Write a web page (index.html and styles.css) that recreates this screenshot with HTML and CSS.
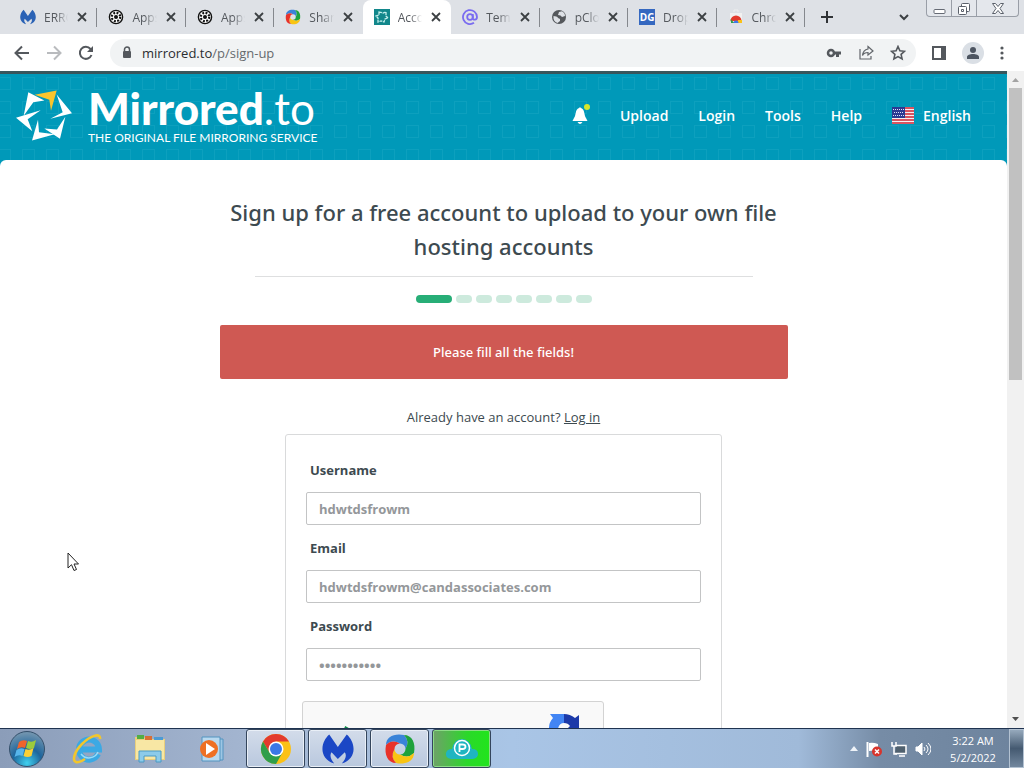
FILE: index.html
```html
<!DOCTYPE html>
<html lang="en">
<head>
<meta charset="UTF-8">
<title>Account - Mirrored.to</title>
<link rel="stylesheet" href="styles.css">
</head>
<body>
<svg class="defs" aria-hidden="true">
  <symbol id="x" viewBox="0 0 10 10"><path d="M1 1l8 8M9 1l-8 8" stroke="#3c4043" stroke-width="1.8"/></symbol>
  <symbol id="wheel" viewBox="0 0 16 16">
    <circle cx="8" cy="8" r="6.6" fill="#fff" stroke="#111" stroke-width="1.4"/>
    <circle cx="8" cy="8" r="4.2" fill="none" stroke="#111" stroke-width="2.2" stroke-dasharray="1.9 1.4"/>
    <circle cx="8" cy="8" r="2" fill="#111"/>
  </symbol>
  <symbol id="malware" viewBox="243 24 97 88">
    <path d="M265 24C240 45 230 95 280 112 268 98 266 86 272 78l19 20 21-20c6 8 4 20-9 34 50-17 40-67 15-88l-27 38z"/>
  </symbol>
  <symbol id="swirl" viewBox="0 0 32 32">
    <path d="M2 12C2 4 10 0 20 2Q26 8 21.500 16A5.500 5.500 0 0 0 16 10.500Q8 6 2 12z" fill="#3a83d8"/>
    <path d="M2 12C2 4 10 0 20 2Q26 8 21.500 16A5.500 5.500 0 0 0 16 10.500Q8 6 2 12z" fill="#1ea23c" transform="rotate(90 16 16)"/>
    <path d="M2 12C2 4 10 0 20 2Q26 8 21.500 16A5.500 5.500 0 0 0 16 10.500Q8 6 2 12z" fill="#f9c413" transform="rotate(180 16 16)"/>
    <path d="M2 12C2 4 10 0 20 2Q26 8 21.500 16A5.500 5.500 0 0 0 16 10.500Q8 6 2 12z" fill="#e8322a" transform="rotate(270 16 16)"/>
  </symbol>
  <symbol id="chrome" viewBox="0 0 32 32">
    <circle cx="16" cy="16" r="15" fill="#fbc116"/>
    <path d="M3 8.500A15 15 0 0 1 29 8.500H16l-6.500 11z" fill="#e33b2e"/>
    <path d="M3 8.500A15 15 0 0 0 16 31l6.500-11.500H9.500z" fill="#2f9e4b"/>
    <circle cx="16" cy="16" r="7.500" fill="#fff"/><circle cx="16" cy="16" r="6" fill="#3b78e7"/>
  </symbol>
</svg>

<header class="browser">
  <div class="strip">
    <div class="tabs">
      <div class="tab"><svg class="fav" fill="#2a62b5"><use href="#malware"/></svg><span>ERROR</span><button aria-label="Close tab"><svg><use href="#x"/></svg></button></div>
      <div class="tab"><svg class="fav"><use href="#wheel"/></svg><span>Apps</span><button aria-label="Close tab"><svg><use href="#x"/></svg></button></div>
      <div class="tab"><svg class="fav"><use href="#wheel"/></svg><span>Apps</span><button aria-label="Close tab"><svg><use href="#x"/></svg></button></div>
      <div class="tab plain"><svg class="fav"><use href="#swirl"/></svg><span>Share</span><button aria-label="Close tab"><svg><use href="#x"/></svg></button></div>
      <div class="tab active plain"><svg class="fav" viewBox="0 0 16 16"><path fill="#12878b" d="M0 0h16v16H0z"/><path d="M5 3l4 1 3-1v4l2 2-3 1-1 3-3-1-3 1V9L2 7l3-1z" fill="none" stroke="#c4efec" stroke-width="1.300" stroke-dasharray="3 .7"/></svg><span>Account</span><button aria-label="Close tab"><svg><use href="#x"/></svg></button></div>
      <div class="tab"><svg class="fav" viewBox="0 0 16 16" fill="none" stroke="#7a6cf0" stroke-width="1.800"><circle cx="8" cy="8" r="2.800"/><path d="M10.800 5v4.300c0 2 4.200 2 4.200-1.300a7 7 0 1 0-3 5.800"/></svg><span>Temp</span><button aria-label="Close tab"><svg><use href="#x"/></svg></button></div>
      <div class="tab"><svg class="fav" viewBox="0 0 16 16"><circle cx="8" cy="8" r="7" fill="#55585c"/><path d="M2.500 7c2 .5 4 0 4.500 2l2 1v2l-2.500 2C3.500 13 2 10.500 2.500 7zM8 3l3-.7C13 3.500 14 5 14 7l-3 1-1.500-1.500L7 6z" fill="#dee1e6"/></svg><span>pCloud</span><button aria-label="Close tab"><svg><use href="#x"/></svg></button></div>
      <div class="tab"><b class="fav dg">DG</b><span>Drop</span><button aria-label="Close tab"><svg><use href="#x"/></svg></button></div>
      <div class="tab"><svg class="fav" viewBox="0 0 16 16"><path d="M2 4h12v10H2z" fill="#f1f1f1"/><path d="M6 3V1h4v2" fill="none" stroke="#eee"/><path d="M2.500 12a5.500 5.500 0 0 1 11 0z" fill="#e33b2e"/><path d="M2.500 10l4 4H3z" fill="#2f9e4b"/><path d="M10 11h4v3H9z" fill="#fbc116"/><path d="M5.500 14a2.500 2.500 0 0 1 5 0z" fill="#3b78e7"/></svg><span>Chrome</span><button aria-label="Close tab"><svg><use href="#x"/></svg></button></div>
    </div>
    <button class="new-tab" aria-label="New tab"><svg width="12" height="12" viewBox="0 0 12 12"><path d="M6 0v12M0 6h12" stroke="#303336" stroke-width="2"/></svg></button>
    <button class="tab-search" aria-label="Search tabs"><svg width="10" height="7" viewBox="0 0 10 7"><path d="M1 1l4 4 4-4" fill="none" stroke="#3c4043" stroke-width="2"/></svg></button>
    <div class="window-buttons">
      <button aria-label="Minimize"><svg width="13" height="15" viewBox="0 0 13 15"><rect x="1" y="8.500" width="11" height="4" rx="1" fill="#fff" stroke="#666b75"/></svg></button>
      <button aria-label="Restore"><svg width="14" height="15" viewBox="0 0 14 15" fill="#fff" stroke="#5a606a"><rect x="4.500" y="2.500" width="8" height="8" rx="1"/><rect x="1.500" y="5.500" width="8" height="8" rx="1"/><path d="M4.500 8.500h2v2h-2z"/></svg></button>
      <button class="win-close" aria-label="Close"><svg width="14" height="13" viewBox="0 0 14 13"><path d="M1.500 1.500h3L7 4.500l2.500-3h3L9 6.500l3.500 5h-3L7 8.500l-2.500 3h-3l3.500-5z" fill="#fff" stroke="#5a606a"/></svg></button>
    </div>
  </div>
  <div class="toolbar">
    <button aria-label="Back"><svg width="16" height="16" viewBox="0 0 16 16"><path d="M15 8H2M8 1.500L1.500 8 8 14.500" fill="none" stroke="#54585d" stroke-width="2"/></svg></button>
    <button aria-label="Forward"><svg width="16" height="16" viewBox="0 0 16 16"><path d="M1 8h13M8 1.500L14.500 8 8 14.500" fill="none" stroke="#b9bbbe" stroke-width="2"/></svg></button>
    <button aria-label="Reload"><svg width="16" height="16" viewBox="0 0 16 16"><path d="M13.500 10A6 6 0 1 1 12.500 4L14 6" fill="none" stroke="#54585d" stroke-width="2"/><path d="M15 1v6H9z" fill="#54585d"/></svg></button>
    <div class="omnibox">
      <svg width="10" height="13" viewBox="0 0 10 13"><rect x="1" y="5" width="8" height="7" rx="1" fill="#54585d"/><path d="M2.500 5V3.500a2.500 2.500 0 0 1 5 0V5" fill="none" stroke="#54585d" stroke-width="1.500"/></svg>
      <span class="url"><b>mirrored.to</b>/p/sign-up</span>
      <button aria-label="Passwords"><svg width="16" height="12" viewBox="0 0 16 12"><path d="M8.500 4.500H15v3h-2v2.500h-3V7.500H8.500z" fill="#54585d"/><circle cx="5" cy="6" r="3" fill="none" stroke="#54585d" stroke-width="2.500"/></svg></button>
      <button aria-label="Share"><svg width="16" height="15" viewBox="0 0 16 15" fill="none" stroke="#62666b" stroke-width="1.200"><path d="M2 4v10h11v-3"/><path d="M10 1.500L15 6l-5 4V7.500Q6 7.500 4.500 10.500 5 5 10 4z"/></svg></button>
      <button aria-label="Bookmark"><svg width="16" height="16" viewBox="0 0 16 16"><path d="M8 1.500l1.900 4.300 4.600.5-3.400 3.100 1 4.600L8 11.600 3.900 14l1-4.600L1.500 6.300l4.600-.5z" fill="none" stroke="#54585d" stroke-width="1.600"/></svg></button>
    </div>
    <button aria-label="Side panel"><svg width="14" height="14" viewBox="0 0 14 14"><path d="M1 1h12v12H1z" fill="none" stroke="#54585d" stroke-width="2"/><path d="M9 1h4v12H9z" fill="#54585d"/></svg></button>
    <button class="avatar" aria-label="Profile"><svg width="14" height="14" viewBox="0 0 14 14" fill="#4d5561"><circle cx="7" cy="4" r="3"/><path d="M1 13v-2c0-4 12-4 12 0v2z"/></svg></button>
    <button aria-label="Menu"><svg width="4" height="14" viewBox="0 0 4 14" fill="#54585d"><circle cx="2" cy="2" r="1.600"/><circle cx="2" cy="7" r="1.600"/><circle cx="2" cy="12" r="1.600"/></svg></button>
  </div>
</header>

<div class="viewport">
  <div class="page">
    <div class="site-header">
      <a class="brand" href="#">
        <svg class="logo" viewBox="48 62 168 152">
          <g fill="#fff">
            <path d="M85 68l48 25-33 5-29 41z"/>
            <path d="M48 145l74-23-39 27 14 36z"/>
            <path d="M114 151l3 37 47 6-68 19z"/>
            <path d="M196 142l-16 66-47-31 38 3z"/>
            <path d="M170 75l46 56-65 17 37-20z"/>
          </g>
          <path d="M104 76l66-13-17 61-5-33z" fill="#fbc52d"/>
        </svg>
        <span class="brand-text">
          <span class="brand-name">Mirrored<i>.to</i></span>
          <span class="tagline">THE ORIGINAL FILE MIRRORING SERVICE</span>
        </span>
      </a>
      <nav>
        <a href="#" class="bell" aria-label="Notifications"><svg width="18" height="22" viewBox="0 0 18 22"><path d="M7 4q1-1.500 2 0c4 1 3 8 5 10l1.500 3H0.500L2 14C4 12 3 5 7 4zM5.500 18h5q-2.500 4-5 0z" fill="#fff"/><circle cx="15" cy="3" r="3" fill="#d6e62b"/></svg></a>
        <a href="#">Upload</a>
        <a href="#">Login</a>
        <a href="#">Tools</a>
        <a href="#">Help</a>
        <a href="#" class="language"><svg width="22" height="17" viewBox="0 0 22 17"><path d="M0 0h22v17H0z" fill="#f5f0f2"/><path d="M0 1h22M0 4h22M0 7h22M0 10h22M0 13h22M0 16h22" stroke="#cf2030" stroke-width="1.600"/><path d="M0 0h13v11H0z" fill="#2c3a92"/><path d="M1 2.500h11M2 5.500h10M1 8.500h11" stroke="#dfe3fa" stroke-dasharray="1 1"/></svg>English</a>
      </nav>
    </div>
    <main>
      <h1>Sign up for a free account to upload to your own file hosting accounts</h1>
      <hr>
      <div class="steps"><i class="on"></i><i></i><i></i><i></i><i></i><i></i><i></i><i></i></div>
      <div class="alert">Please fill all the fields!</div>
      <p class="have-account">Already have an account? <a href="#">Log in</a></p>
      <form>
        <div class="field">
          <label for="username">Username</label>
          <input type="text" id="username" value="hdwtdsfrowm">
        </div>
        <div class="field">
          <label for="email">Email</label>
          <input type="email" id="email" value="hdwtdsfrowm@candassociates.com">
        </div>
        <div class="field">
          <label for="password">Password</label>
          <input type="password" id="password" value="abcdefghijk">
        </div>
        <div class="captcha">
          <svg width="30" height="30" viewBox="0 0 30 30"><path d="M4 13l8 8L21 3" fill="none" stroke="#108a4b" stroke-width="4"/></svg>
          <svg width="32" height="32" viewBox="0 0 32 32"><path d="M1 16A15 15 0 0 1 5 5L2 1h14v9q-5 0-6 6z" fill="#4285f4"/><path d="M16 1q6 0 11 4l4-3v15H18l4-4q-2-3-6-3z" fill="#1c3aa9"/><path d="M1 16h12l-3 4q6 6 12 0l5 5Q16 36 5 26l-4 4z" fill="#ababab"/></svg>
        </div>
      </form>
    </main>
  </div>
  <div class="scrollbar">
    <svg width="7" height="4" viewBox="0 0 7 4"><path d="M0 4l3.500-4L7 4z" fill="#a3a3a3"/></svg>
    <div class="thumb"></div>
    <svg width="7" height="4" viewBox="0 0 7 4"><path d="M0 0l3.500 4L7 0z" fill="#505050"/></svg>
  </div>
</div>

<footer class="taskbar">
  <button class="start" aria-label="Start">
    <svg width="38" height="38" viewBox="0 0 38 38">
      <defs><radialGradient id="orb" cx=".5" cy=".9" r=".85"><stop offset="0" stop-color="#3fd0ef"/><stop offset=".5" stop-color="#1d659c"/><stop offset="1" stop-color="#6f93ae"/></radialGradient></defs>
      <circle cx="19" cy="19" r="17.500" fill="url(#orb)" stroke="#35506b"/>
      <path d="M11 12q4-3 8-1l-2 7q-4-2-8 1z" fill="#f0642b"/><path d="M20 11q4 2 8-1l-2 8q-4 2-8 0z" fill="#9ccb3b"/>
      <path d="M8.500 20q4-3 8-1l-2 7q-4-2-8 1z" fill="#57b5ea"/><path d="M17.500 19q4 2 8-1l-2 8q-4 2-8 0z" fill="#fbd035"/>
    </svg>
  </button>
  <button class="pinned" aria-label="Internet Explorer">
    <svg width="32" height="32" viewBox="0 0 32 32"><path d="M26 21A10 10 0 1 1 27 16.500H9" fill="none" stroke="#3ba9e4" stroke-width="6"/><path d="M26 19A10 10 0 0 1 9 21" fill="none" stroke="#9adcf8" stroke-width="1.500"/><path d="M28 6c1-7-10-3-18 5S0 28 4 29c3 1 6-1 9-3" fill="none" stroke="#f2c62c" stroke-width="2.600"/></svg>
  </button>
  <button class="pinned" aria-label="Windows Explorer">
    <svg width="32" height="30" viewBox="0 0 32 30"><path d="M1 3h9l2 2h19v21H1z" fill="#e9cf7c"/><path d="M3 1h7v4H3z" fill="#52ae45"/><path d="M11 2h7v4h-7z" fill="#d96f34"/><path d="M20 3h9v4h-9z" fill="#4d9bd3"/><path d="M2 6h28v19H2z" fill="#f8e7a4"/><path d="M5 28V17h22v11h-5v-6H10v6z" fill="#8ccbea" stroke="#4b9ac4"/></svg>
  </button>
  <button class="pinned" aria-label="Media Player">
    <svg width="28" height="28" viewBox="0 0 28 28"><path d="M7 4h18v21H7z" fill="#9dc6e4" stroke="#5394c0"/><path d="M4 2h18v24H4z" fill="#b9d9ef" stroke="#5394c0"/><circle cx="11" cy="14" r="9" fill="#ee7024"/><path d="M8 8l9 6-9 6z" fill="#fff"/></svg>
  </button>
  <button class="task" aria-label="Chrome"><svg width="32" height="32"><use href="#chrome"/></svg></button>
  <button class="task" aria-label="Malwarebytes"><svg width="32" height="30" fill="#1b47c5"><use href="#malware"/></svg></button>
  <button class="task" aria-label="Browser"><svg width="32" height="32"><use href="#swirl"/></svg></button>
  <button class="task green" aria-label="P"><svg width="34" height="26" viewBox="0 0 34 26"><path d="M6 23q-6-1-5-6 1-4 6-4Q9 3 17 3t10 10q6 0 6 5 0 4-5 5z" fill="#1fb5c1"/><circle cx="17" cy="12" r="7.500" fill="none" stroke="#fff" stroke-width="1.500"/><path d="M14.500 16V8.500h3q3 0 3 2.200t-3 2.300h-3" fill="none" stroke="#fff" stroke-width="1.800"/></svg></button>
  <div class="tray">
    <svg width="8" height="5" viewBox="0 0 8 5"><path d="M0 5l4-5 4 5z" fill="#eef3f8"/></svg>
    <svg width="17" height="16" viewBox="0 0 17 16"><path d="M1.500 1v15" stroke="#fff" stroke-width="2"/><path d="M3 2q4-1 9 1v7q-5-1-9 0z" fill="#fff"/><circle cx="11" cy="10.500" r="5" fill="#d8342c"/><path d="M9 8.500l4 4M13 8.500l-4 4" stroke="#fff" stroke-width="1.500"/></svg>
    <svg width="16" height="16" viewBox="0 0 16 16"><path d="M5 4.500h10v8H4M8 15h6" fill="#50616f" stroke="#fff" stroke-width="1.500"/><path d="M1 1v4h4V1M3 5v8h3" fill="none" stroke="#fff" stroke-width="1.500"/></svg>
    <svg width="16" height="14" viewBox="0 0 16 14" fill="none" stroke="#fff"><path d="M1 5h2l4-4v12L3 9H1z" fill="#fff"/><path d="M9 5q2 2 0 4M11 3q4 4 0 8M13 1q6 6 0 12"/></svg>
    <div class="clock">3:22 AM<br>5/2/2022</div>
  </div>
  <button class="show-desktop" aria-label="Show desktop"></button>
</footer>

<svg class="cursor" width="13" height="20" viewBox="0 0 13 20"><path d="M1 1v15l3.500-3.300L7 18.500l2.500-1L7 12h4.500z" fill="#fff" stroke="#222"/></svg>
</body>
</html>
```

FILE: styles.css
```css
* {
  box-sizing: border-box;
}
body {
  display: flex;
  flex-direction: column;
  height: 100vh;
  margin: 0;
  overflow: hidden;
  font-family: "Open Sans", "Noto Sans", sans-serif;
  font-size: 13px;
  color: #3d4a50;
  background: #fff;
}
button {
  display: flex;
  align-items: center;
  justify-content: center;
  padding: 0;
  border: none;
  background: none;
}
svg {
  display: block;
  flex: none;
}
a {
  color: inherit;
}
.defs {
  display: none;
}

/* browser window */
.strip {
  display: flex;
  align-items: center;
  height: 34px;
  padding: 0 5px 0 9px;
  background: #dee1e6;
}
.tabs {
  display: flex;
  flex: 0 1 796px;
  min-width: 0;
}
.tab {
  display: flex;
  flex: 1;
  align-items: center;
  min-width: 0;
  height: 34px;
  padding: 0 10px 0 11px;
  font-size: 12px;
  color: #55595e;
}
.tab::after {
  content: "";
  flex: none;
  width: 1px;
  height: 19px;
  margin: 0 -10px 0 9px;
  background: #85888d;
}
.tab.plain::after {
  background: none;
}
.tab.active {
  background: #fff;
  border-radius: 8px 8px 0 0;
}
.tab span {
  flex: 1;
  min-width: 0;
  margin: 0 9px 0 8px;
  overflow: hidden;
  white-space: nowrap;
  -webkit-mask-image: linear-gradient(to right, #000 50%, transparent);
  mask-image: linear-gradient(to right, #000 50%, transparent);
}
.tab button svg {
  width: 10px;
  height: 10px;
}
.fav {
  flex: none;
  width: 16px;
  height: 16px;
}
.dg {
  background: #3568c0;
  color: #fff;
  font-size: 10px;
  line-height: 16px;
  text-align: center;
}
.new-tab {
  width: 44px;
  height: 34px;
}
.tab-search {
  width: 30px;
  height: 34px;
  margin-left: auto;
  margin-right: 7px;
}
.window-buttons {
  display: flex;
  align-self: flex-start;
  height: 17px;
  border: 1px solid #999ea7;
  border-top: none;
  border-radius: 0 0 4px 4px;
  background: #e4e7ec;
}
.window-buttons button {
  width: 25px;
  border-right: 1px solid #999ea7;
}
.window-buttons .win-close {
  width: 41px;
  border: none;
}
.toolbar {
  display: flex;
  align-items: center;
  gap: 16px;
  height: 37px;
  padding: 0 20px 0 14px;
  background: #fff;
}
.omnibox {
  display: flex;
  flex: 1;
  align-items: center;
  gap: 16px;
  height: 28px;
  padding: 0 10px 0 12px;
  border-radius: 14px;
  background: #f1f3f4;
}
.url {
  flex: 1;
  margin-left: -6px;
  color: #666a6e;
}
.url b {
  font-weight: 400;
  color: #2b2d30;
}
.avatar {
  width: 22px;
  height: 22px;
  border-radius: 50%;
  background: #dadfe5;
}

/* page */
.viewport {
  display: flex;
  flex: 1;
  min-height: 0;
}
.page {
  flex: 1;
  min-width: 0;
  overflow: hidden;
  border-top: 3px solid #38565c;
  background: #0099b9;
}
.site-header {
  display: flex;
  align-items: center;
  justify-content: space-between;
  height: 86px;
  padding: 0 36px 4px 16px;
  background: url("data:image/svg+xml,%3Csvg xmlns='http://www.w3.org/2000/svg' width='24' height='24'%3E%3Cpath d='M.5.500h12v12H.500z' fill='none' stroke='%2333b3cb' stroke-opacity='.25'/%3E%3C/svg%3E") -2px 3px;
}
.brand {
  display: flex;
  align-items: center;
  gap: 16px;
  color: #fff;
  font-family: Lato, sans-serif;
  text-decoration: none;
}
.logo {
  width: 56px;
  height: 51px;
}
.brand-text {
  display: flex;
  flex-direction: column;
}
.brand-name {
  font-size: 44px;
  font-weight: 900;
  line-height: 46px;
}
.brand-name i {
  font-style: normal;
  font-weight: 400;
}
.tagline {
  font-size: 12px;
  line-height: 14px;
}
nav {
  display: flex;
  align-items: center;
  gap: 30px;
  color: #fff;
  font-size: 14px;
  font-weight: 600;
}
nav a {
  text-decoration: none;
}
.language {
  display: flex;
  align-items: center;
  gap: 9px;
}
main {
  min-height: 100%;
  padding-top: 35px;
  border-radius: 6px 6px 0 0;
  background: #fff;
}
h1 {
  max-width: 568px;
  margin: 0 auto;
  font-family: "Noto Sans", "Open Sans", sans-serif;
  font-size: 22px;
  font-weight: 500;
  line-height: 34px;
  text-align: center;
}
hr {
  max-width: 498px;
  margin: 13px auto 18px;
  border: none;
  border-top: 1px solid #dedfe0;
}
.steps {
  display: flex;
  justify-content: center;
  gap: 4px;
}
.steps i {
  width: 16px;
  height: 8px;
  border-radius: 4px;
  background: #cdeadd;
}
.steps .on {
  width: 36px;
  background: #27ae77;
}
.alert {
  max-width: 568px;
  margin: 22px auto 0;
  border-radius: 2px;
  background: #cf5953;
  color: #fff;
  font-family: "Noto Sans", "Open Sans", sans-serif;
  font-weight: 500;
  line-height: 54px;
  text-align: center;
}
.have-account {
  margin: 28px 0 7px;
  line-height: 20px;
  text-align: center;
}
form {
  max-width: 437px;
  margin: 0 auto;
  padding: 25px 16px;
  border: 1px solid #d9dadb;
  border-radius: 3px;
}
.field {
  padding: 0 4px;
  margin-bottom: 13px;
}
label {
  display: block;
  margin: 0 4px 12px;
  font-weight: 700;
  line-height: 20px;
}
.field input {
  display: block;
  width: 100%;
  height: 33px;
  padding: 0 12px;
  border: 1px solid #c3c4c5;
  border-radius: 2px;
  color: #94979a;
  font: inherit;
  font-weight: 700;
}
.field input[type="password"] {
  font-size: 15px;
}
.captcha {
  display: flex;
  align-items: flex-start;
  justify-content: space-between;
  width: 302px;
  height: 76px;
  margin-top: 20px;
  padding: 11px 23px;
  border: 1px solid #d3d3d3;
  border-radius: 3px;
  background: #f9f9f9;
}
.captcha svg:first-child {
  margin-top: 11px;
}
.scrollbar {
  display: flex;
  flex-direction: column;
  align-items: center;
  width: 17px;
  padding: 7px 0;
  background: #f1f1f1;
}
.scrollbar .thumb {
  width: 13px;
  height: 292px;
  margin: 6px 0 auto;
  background: #c1c1c1;
}

/* taskbar */
.taskbar {
  display: flex;
  align-items: center;
  height: 40px;
  border-top: 1px solid #1f3350;
  background: linear-gradient(to right, #8b9db9, #a3b5d0 24%, #a9c5e6 50%, #a0bad9 78%, #768ca6 86%, #6d839d);
}
.start {
  width: 54px;
  margin-right: 3px;
}
.pinned {
  width: 62px;
}
.task {
  width: 59px;
  height: 39px;
  margin-left: 3px;
  border: 1px solid #34455c;
  border-radius: 3px;
  background: linear-gradient(#d3dcea, #b9c8de);
  box-shadow: inset 0 0 0 1px #e9eff7;
}
.task.green {
  background: linear-gradient(to right, #6fa169, #2bd82a 60%, #21e51c);
  box-shadow: inset 0 0 0 1px #8cdd86;
}
.tray {
  display: flex;
  align-items: center;
  gap: 8px;
  margin-left: auto;
  color: #fff;
}
.clock {
  width: 66px;
  margin-left: 1px;
  font-size: 11px;
  line-height: 17px;
  text-align: center;
}
.show-desktop {
  width: 15px;
  height: 39px;
  margin-left: 3px;
  border: 1px solid #b3c2d2;
  background: linear-gradient(#96a9bc, #455a71 50%, #72879e);
}
.cursor {
  position: absolute;
  left: 67px;
  top: 552px;
}
```
